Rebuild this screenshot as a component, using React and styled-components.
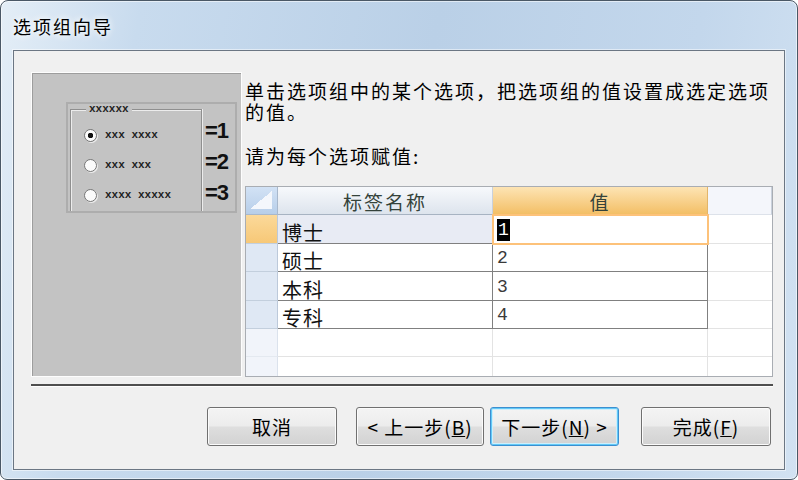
import React from 'react';
import styled, { createGlobalStyle } from 'styled-components';

const cjk = `"Noto Sans CJK SC", "Liberation Sans", sans-serif`;

const GlobalStyle = createGlobalStyle`
    html, body {
        margin: 0;
        padding: 0;
        background: #ffffff;
    }
    body {
        font-family: ${cjk};
    }
`

// Window chrome

const Window = styled.div`
    box-sizing: border-box;
    width: 798px;
    height: 480px;
    display: flex;
    flex-direction: column;
    padding: 0 12px 9px 12px;
    border: 1px solid #4a5866;
    border-radius: 8px 8px 7px 7px;
    background: linear-gradient(100deg, #e4eef7 0%, #c8dbee 16%, #bad0e7 50%, #c3d7ec 80%, #d2e2f2 100%);
    box-shadow: inset 0 0 0 1px rgba(255, 255, 255, 0.55);
    overflow: hidden;
`
const TitleBar = styled.div`
    height: 49px;
    display: flex;
    align-items: center;
    font-family: ${cjk};
    font-size: 18px;
    letter-spacing: 2px;
    color: #000;
    text-shadow: 0 0 6px #fff, 0 0 10px rgba(255, 255, 255, 0.8);
`
const Client = styled.div`
    flex: 1;
    box-sizing: border-box;
    display: flex;
    flex-direction: column;
    padding: 21px 11px 0 17px;
    background: #f0f0f0;
    border: 1px solid #6b7683;
    box-shadow: 0 0 0 1px rgba(255, 255, 255, 0.5);
`
const TopSection = styled.div`
    display: flex;
    gap: 3px;
    height: 305px;
`

// Left preview panel

const Preview = styled.div`
    width: 211px;
    box-sizing: border-box;
    padding: 29px 0 0 34px;
    background: #c3c3c3;
    border: 1px solid #fdfdfd;
    box-shadow: inset 1px 1px 0 #9d9d9d;
`
const InnerFrame = styled.div`
    box-sizing: border-box;
    width: 171px;
    height: 111px;
    display: flex;
    align-items: flex-start;
    padding-left: 2px;
    border: 2px solid #adadad;
`
const Group = styled.fieldset`
    box-sizing: border-box;
    width: 132px;
    height: 107px;
    margin: 0;
    padding: 6px 0 0 0;
    min-width: 0;
    border: 1px solid #8f8f8f;
    border-bottom: none;
    box-shadow: inset 1px 1px 0 #ececec, 1px 0 0 #ececec;
`
const Legend = styled.legend`
    margin-left: 15px;
    padding: 0 3px;
    background: #c3c3c3;
    font-family: "Liberation Mono", monospace;
    font-weight: bold;
    font-size: 11px;
    line-height: 10px;
    color: #222;
`
const RadioRow = styled.div`
    height: 30px;
    display: flex;
    align-items: center;
    padding-left: 13px;
    gap: 8px;
`
const Radio = styled.span`
    box-sizing: border-box;
    width: 13px;
    height: 13px;
    border-radius: 50%;
    border: 1px solid #767676;
    background: ${p => p.$checked
        ? 'radial-gradient(circle, #111 0 2.5px, #fbfbfb 3px)'
        : '#fbfbfb'};
    box-shadow: 1px 1px 0 #ededed;
`
const RadioLabel = styled.span`
    font-family: "Liberation Mono", monospace;
    font-weight: bold;
    font-size: 11px;
    color: #1e1e1e;
`
const EqColumn = styled.div`
    display: flex;
    flex-direction: column;
    margin-left: 3px;
    padding-top: 11px;
`
const EqLabel = styled.div`
    height: 31px;
    line-height: 31px;
    font-family: "Liberation Sans", sans-serif;
    font-weight: bold;
    font-size: 22px;
    letter-spacing: -1px;
    color: #111;
`

// Right column

const RightColumn = styled.div`
    flex: 1;
    display: flex;
    flex-direction: column;
`
const Paragraph = styled.div`
    padding-top: 8px;
    font-family: ${cjk};
    font-size: 19px;
    letter-spacing: 2px;
    line-height: 21px;
    white-space: nowrap;
    color: #000;
`
const Line = styled.div`
    height: 21px;
    overflow: visible;
`
const Prompt = styled(Paragraph)`
    padding-top: 23px;
`

// Datasheet

const Sheet = styled.div`
    margin-top: auto;
    height: 191px;
    box-sizing: border-box;
    display: grid;
    grid-template-columns: 32px 215px 215px 1fr;
    grid-template-rows: 28px 29px 28px 29px 28px 28px 28px;
    border: 1px solid #a9adb3;
    background: #fff;
    overflow: hidden;
`
const Corner = styled.div`
    box-sizing: border-box;
    padding: 4px 5px 5px 4px;
    display: flex;
    background: linear-gradient(#d2e2f5, #b7cee9);
    border-right: 1px solid #a8b8cc;
    border-bottom: 1px solid #a8b8cc;
`
const CornerTriangle = styled.span`
    flex: 1;
    background: linear-gradient(to bottom right, transparent 50%, #f4f7fc 50%);
`
const headTones = {
    plain: 'linear-gradient(#f7f9fc, #dde4ed)',
    active: 'linear-gradient(#fde4b4, #f3bf66)',
    blank: '#f4f6fb',
}
const HeadCell = styled.div`
    box-sizing: border-box;
    display: flex;
    align-items: center;
    justify-content: center;
    padding-top: 2px;
    background: ${p => headTones[p.$tone]};
    border-right: 1px solid ${p => p.$tone === 'active' ? '#e2b56a' : '#c9d1dc'};
    border-bottom: 1px solid ${p => p.$tone === 'plain' ? '#a7b3c2' : p.$tone === 'active' ? '#e7ad55' : '#dde2ea'};
    font-family: ${cjk};
    font-size: 19px;
    letter-spacing: 2px;
    color: #34423a;
`
const Selector = styled.div`
    box-sizing: border-box;
    background: ${p => p.$active
        ? 'linear-gradient(#fbd99a, #f7c877)'
        : p.$empty ? '#f1f4fa' : '#dfe8f4'};
    border-right: 1px solid ${p => p.$empty ? '#dbe2ec' : '#bcc9da'};
    border-bottom: 1px solid ${p => p.$empty ? '#e4e9f0' : '#c3cfdd'};
`
const NameCell = styled.div`
    box-sizing: border-box;
    display: flex;
    align-items: flex-end;
    padding-left: 4px;
    background: ${p => p.$current ? '#e8ebf4' : '#fff'};
    border-right: 1px solid ${p => p.$empty ? '#e3e3e3' : '#808080'};
    border-bottom: 1px solid ${p => p.$empty ? '#e3e3e3' : '#808080'};
    font-family: ${cjk};
    font-size: 20px;
    line-height: 21px;
    letter-spacing: 1px;
    color: #111;
`
const ValueCell = styled.div`
    box-sizing: border-box;
    display: flex;
    align-items: flex-end;
    padding: 0 0 3px 4px;
    background: #fff;
    border-right: 1px solid ${p => p.$empty ? '#e3e3e3' : '#808080'};
    border-bottom: 1px solid ${p => p.$empty ? '#e3e3e3' : '#808080'};
    outline: ${p => p.$current ? '2px solid #fdc27a' : 'none'};
    outline-offset: -1px;
    position: ${p => p.$current ? 'relative' : 'static'};
    z-index: ${p => p.$current ? 1 : 0};
    font-family: "Liberation Mono", monospace;
    font-size: 18px;
    line-height: 20px;
    color: #3a3a3a;
`
const SelectedText = styled.span`
    background: #000;
    color: #fff;
    line-height: 22px;
    padding: 0 1px;
    margin-bottom: -1px;
`
const BlankCell = styled.div`
    box-sizing: border-box;
    background: #fff;
    border-bottom: 1px solid #e3e3e3;
`

// Footer

const Separator = styled.div`
    margin-top: 7px;
    height: 2px;
    background: #4f4f4f;
    border-bottom: 1px solid #ffffff;
`
const ButtonRow = styled.div`
    display: flex;
    justify-content: flex-end;
    margin-top: 20px;
    padding-right: 2px;
`
const Button = styled.button`
    box-sizing: border-box;
    width: ${p => p.$w}px;
    height: 39px;
    margin-left: ${p => p.$ml || 0}px;
    padding: 0;
    border: 1px solid ${p => p.$default ? '#3c8fd0' : '#707070'};
    border-radius: 3px;
    background: linear-gradient(#f4f4f4 0%, #ececec 48%, #dedede 52%, #d2d2d2 100%);
    box-shadow: ${p => p.$default
        ? 'inset 0 0 0 1px #62c9f7, inset 0 0 0 2px #cdeefc'
        : 'inset 0 0 0 1px #fbfbfb'};
    font-family: ${cjk};
    font-size: 19px;
    letter-spacing: 1px;
    color: #000;
    white-space: nowrap;
`
const Key = styled.span`
    text-decoration: underline;
`

const rows = [
    { name: '博士', value: '1', current: true },
    { name: '硕士', value: '2' },
    { name: '本科', value: '3' },
    { name: '专科', value: '4' },
]

const radios = [
    { label: 'xxx xxxx', checked: true },
    { label: 'xxx xxx' },
    { label: 'xxxx xxxxx' },
]

const App = () => {
    return (
        <Window>
            <GlobalStyle/>
            <TitleBar>选项组向导</TitleBar>
            <Client>
                <TopSection>
                    <Preview>
                        <InnerFrame>
                            <Group>
                                <Legend>xxxxxx</Legend>
                                {radios.map(r => (
                                    <RadioRow key={r.label}>
                                        <Radio $checked={r.checked}/>
                                        <RadioLabel>{r.label}</RadioLabel>
                                    </RadioRow>
                                ))}
                            </Group>
                            <EqColumn>
                                <EqLabel>=1</EqLabel>
                                <EqLabel>=2</EqLabel>
                                <EqLabel>=3</EqLabel>
                            </EqColumn>
                        </InnerFrame>
                    </Preview>

                    <RightColumn>
                        <Paragraph>
                            <Line>单击选项组中的某个选项，把选项组的值设置成选定选项</Line>
                            <Line>的值。</Line>
                        </Paragraph>
                        <Prompt>请为每个选项赋值:</Prompt>
                        <Sheet>
                            <Corner><CornerTriangle/></Corner>
                            <HeadCell $tone="plain">标签名称</HeadCell>
                            <HeadCell $tone="active">值</HeadCell>
                            <HeadCell $tone="blank"/>

                            {rows.map(row => (
                                <React.Fragment key={row.name}>
                                    <Selector $active={row.current}/>
                                    <NameCell $current={row.current}>{row.name}</NameCell>
                                    <ValueCell $current={row.current}>
                                        {row.current ? <SelectedText>{row.value}</SelectedText> : row.value}
                                    </ValueCell>
                                    <BlankCell/>
                                </React.Fragment>
                            ))}

                            {[0, 1].map(i => (
                                <React.Fragment key={'empty' + i}>
                                    <Selector $empty/>
                                    <NameCell $empty/>
                                    <ValueCell $empty/>
                                    <BlankCell/>
                                </React.Fragment>
                            ))}
                        </Sheet>
                    </RightColumn>
                </TopSection>

                <Separator/>

                <ButtonRow>
                    <Button $w={130}>取消</Button>
                    <Button $w={128} $ml={19}>&lt; 上一步(<Key>B</Key>)</Button>
                    <Button $w={129} $ml={6} $default>下一步(<Key>N</Key>) &gt;</Button>
                    <Button $w={130} $ml={22}>完成(<Key>F</Key>)</Button>
                </ButtonRow>
            </Client>
        </Window>
    );
};

export default App;
